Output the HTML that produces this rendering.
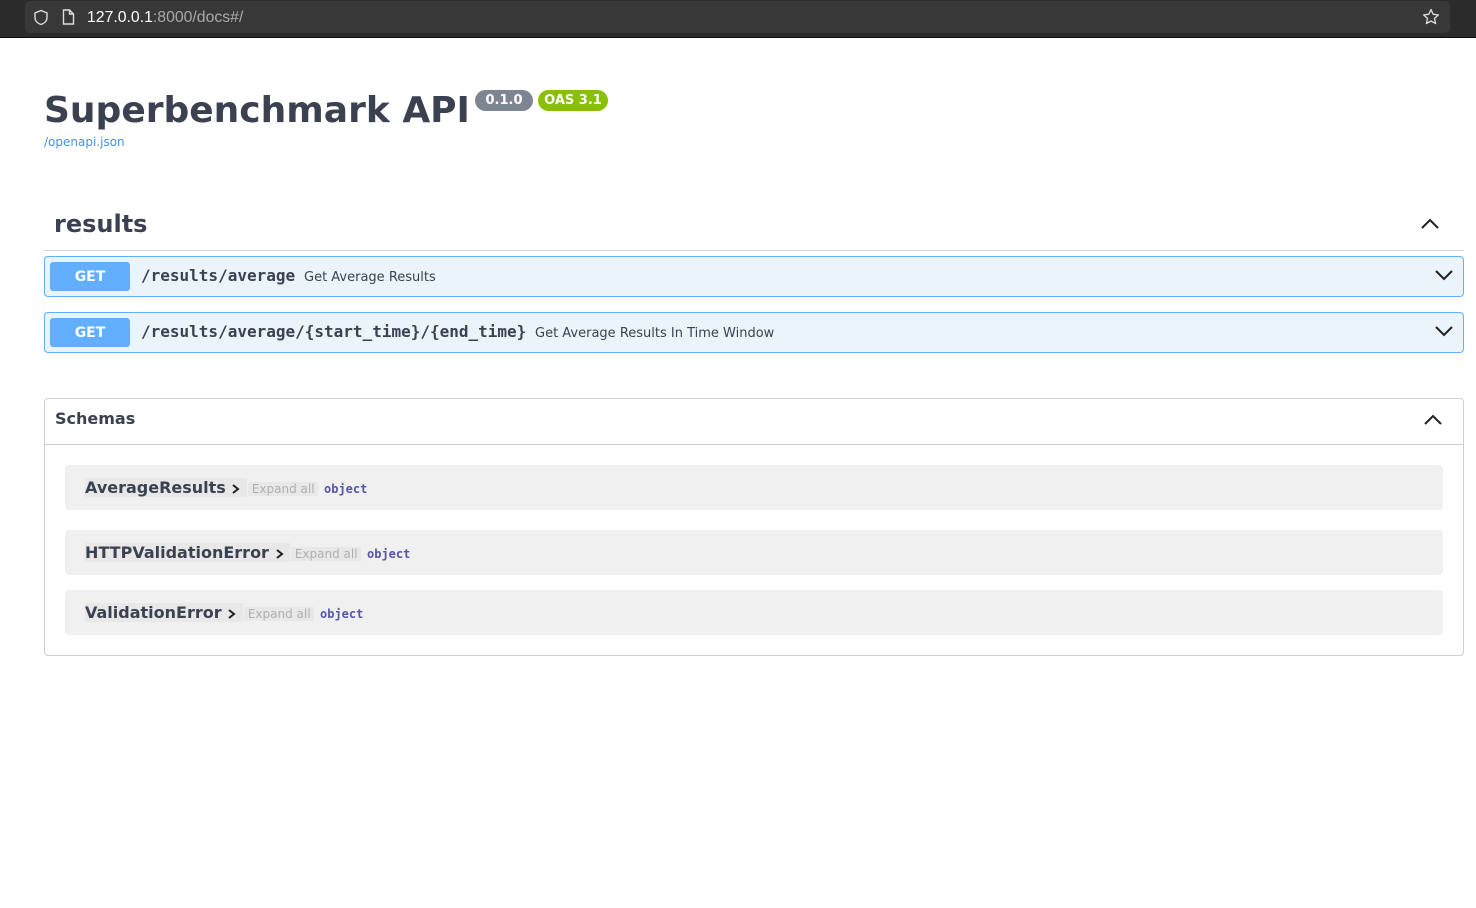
<!DOCTYPE html>
<html><head><meta charset="utf-8"><style>
*{box-sizing:border-box;margin:0;padding:0}
body{width:1476px;height:908px;background:#fff;font-family:"DejaVu Sans","Liberation Sans",sans-serif;position:relative;overflow:hidden}
.bar{position:absolute;left:0;top:0;width:1476px;height:38px;background:#2b2b2b;border-bottom:1px solid #0c0c0c}
.field{position:absolute;left:25px;top:1px;width:1425px;height:32px;background:#383838;border-radius:5px}
.url{position:absolute;left:87px;top:9px;font-size:15.8px;color:#fff;font-family:"Liberation Sans","DejaVu Sans",sans-serif}
.url span{color:#aaa}
.abs{position:absolute}
h1{position:absolute;left:44px;top:90px;font-size:36px;font-weight:bold;color:#3b4151}
.badge{position:absolute;top:90px;height:21px;border-radius:11px;color:#fff;font-size:13px;font-weight:bold;line-height:21px;text-align:center}
.link{position:absolute;left:44px;top:135px;font-size:12px;color:#4990e2}
.tag{position:absolute;left:54px;top:210px;font-size:24px;font-weight:bold;color:#3b4151}
.hr{position:absolute;left:44px;top:250px;width:1420px;height:1px;background:#d0d0d0}
.op{position:absolute;left:44px;width:1420px;height:41px;background:#ebf3fb;border:1px solid #61affe;border-radius:4px}
.get{position:absolute;left:5px;top:5px;width:80px;height:29px;background:#61affe;border-radius:3px;color:#fff;font-weight:bold;font-size:14px;text-align:center;line-height:30px}
.path{position:absolute;left:96px;top:9px;font-family:"DejaVu Sans Mono","Liberation Mono",monospace;font-weight:bold;font-size:16px;color:#3b4151}
.sum{position:absolute;top:12px;font-size:13px;color:#3b4151}
.sch{position:absolute;left:44px;top:398px;width:1420px;height:258px;border:1px solid #cfcfcf;border-radius:4px}
.schh{position:absolute;left:0;top:0;width:100%;height:46px;border-bottom:1px solid #cfcfcf}
.model{position:absolute;left:20px;width:1378px;height:45px;background:#f0f0f0;border-radius:4px}
.mn{position:absolute;top:13px;font-size:16px;font-weight:bold;color:#3b4151;background:#e8e8e8}
.ex{position:absolute;top:17px;font-size:12px;color:#afafaf;background:#e8e8e8}
.obj{position:absolute;top:17px;font-family:"DejaVu Sans Mono",monospace;font-weight:bold;font-size:12px;color:#55a}
.chev{display:inline-block;vertical-align:middle}
</style></head><body>
<div class="bar"><div class="field"></div>
<svg class="abs" style="left:33px;top:9px" width="16" height="17" viewBox="0 0 16 17"><path d="M8 1.5L2 4v4.5c0 3.5 2.7 6 6 7 3.3-1 6-3.5 6-7V4z" fill="none" stroke="#ddd" stroke-width="1.4"/></svg>
<svg class="abs" style="left:62px;top:9px" width="13" height="16" viewBox="0 0 13 16"><path d="M1.5 1h6l4 4v10h-10z M7.5 1v4h4" fill="none" stroke="#ddd" stroke-width="1.4"/></svg>
<div class="url">127.0.0.1<span>:8000/docs#/</span></div>
<svg class="abs" style="left:1422px;top:8px" width="18" height="18" viewBox="0 0 18 18"><path d="M9 1.5l2.2 4.8 5.2.6-3.9 3.5 1.1 5.2L9 13l-4.6 2.6 1.1-5.2L1.6 6.9l5.2-.6z" fill="none" stroke="#ddd" stroke-width="1.3" stroke-linejoin="round"/></svg>
</div>
<h1>Superbenchmark API</h1>
<div class="badge" style="left:475px;width:58px;background:#7d8492;top:90px">0.1.0</div>
<div class="badge" style="left:538px;width:70px;background:#89bf04;top:90px">OAS 3.1</div>
<div class="link">/openapi.json</div>
<div class="tag">results</div>
<svg class="abs" style="left:1420px;top:216px" width="20" height="14" viewBox="0 0 20 14"><path d="M2 12L10 4l8 8" fill="none" stroke="#222" stroke-width="2"/></svg>
<div class="hr"></div>
<div class="op" style="top:256px"><div class="get">GET</div><div class="path">/results/average</div><div class="sum" style="left:259px;top:13px">Get Average Results</div>
<svg class="abs" style="left:1389px;top:11px" width="20" height="14" viewBox="0 0 20 14"><path d="M2 3l8 8 8-8" fill="none" stroke="#222" stroke-width="2"/></svg></div>
<div class="op" style="top:312px"><div class="get">GET</div><div class="path">/results/average/{start_time}/{end_time}</div><div class="sum" style="left:490px;top:13px">Get Average Results In Time Window</div>
<svg class="abs" style="left:1389px;top:11px" width="20" height="14" viewBox="0 0 20 14"><path d="M2 3l8 8 8-8" fill="none" stroke="#222" stroke-width="2"/></svg></div>
<div class="sch"><div class="schh"><div class="abs" style="left:10px;top:10px;font-size:16px;font-weight:bold;color:#3b4151">Schemas</div>
<svg class="abs" style="left:1378px;top:13px" width="20" height="14" viewBox="0 0 20 14"><path d="M2 12L10 4l8 8" fill="none" stroke="#222" stroke-width="2"/></svg></div>
<div class="model" style="top:66px"><div class="mn" style="left:20px">AverageResults <svg class="chev" width="10" height="12" viewBox="0 0 10 12"><path d="M2 2l5 4-5 4" fill="none" stroke="#222" stroke-width="2"/></svg>&nbsp;</div><div class="ex" style="left:183px">&nbsp;Expand all&nbsp;</div><div class="obj" style="left:259px">object</div></div>
<div class="model" style="top:131px"><div class="mn" style="left:20px">HTTPValidationError <svg class="chev" width="10" height="12" viewBox="0 0 10 12"><path d="M2 2l5 4-5 4" fill="none" stroke="#222" stroke-width="2"/></svg>&nbsp;</div><div class="ex" style="left:226px">&nbsp;Expand all&nbsp;</div><div class="obj" style="left:302px">object</div></div>
<div class="model" style="top:191px"><div class="mn" style="left:20px">ValidationError <svg class="chev" width="10" height="12" viewBox="0 0 10 12"><path d="M2 2l5 4-5 4" fill="none" stroke="#222" stroke-width="2"/></svg>&nbsp;</div><div class="ex" style="left:179px">&nbsp;Expand all&nbsp;</div><div class="obj" style="left:255px">object</div></div>
</div>
</body></html>
